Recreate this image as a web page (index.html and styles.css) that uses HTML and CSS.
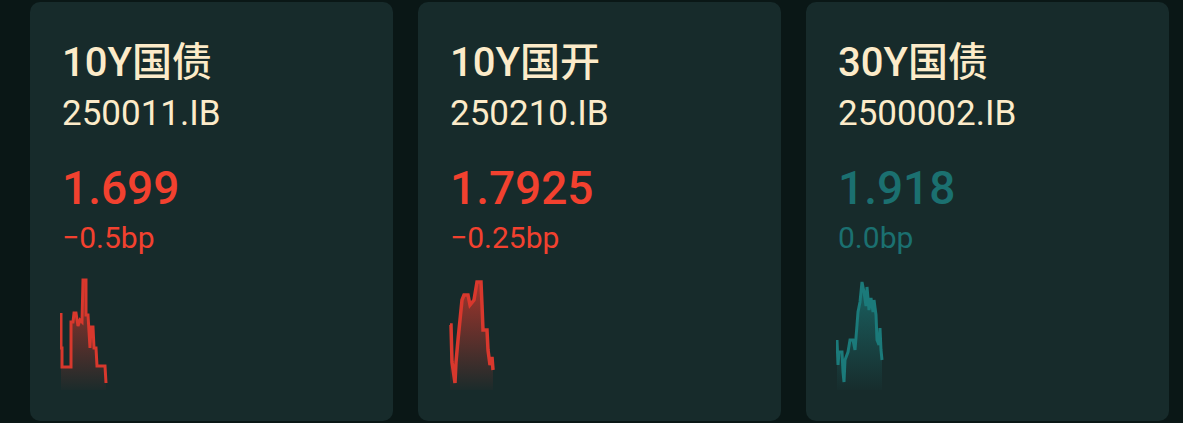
FILE: index.html
```html
<!DOCTYPE html>
<html lang="zh-CN">

<head>
    <meta charset="UTF-8">
    <meta name="viewport" content="width=device-width, initial-scale=1.0">
    <title>利率行情</title>
    <link rel="stylesheet" href="styles.css">
</head>

<body>
    <div class="board">
        <!-- 10Y国债 -->
        <div class="card down">
            <div class="title">10Y国债</div>
            <div class="code">250011.IB</div>
            <div class="price">1.699</div>
            <div class="change">−0.5bp</div>
            <svg class="spark" width="50" height="115" viewBox="0 0 50 115">
                <defs>
                    <linearGradient id="fillRed1" x1="0" y1="0" x2="0" y2="1">
                        <stop offset="0" stop-color="#e0392c" stop-opacity="0.7" />
                        <stop offset="1" stop-color="#e0392c" stop-opacity="0.02" />
                    </linearGradient>
                </defs>
                <path class="area" fill="url(#fillRed1)"
                    d="M1,38 L1,73 L2,73 L2,92 L11,92 L11,47 L13,47 L14,38 L16,38 L18,51 L20,45 L22,47 L23,5 L26,5 L26,40 L28,40 L30,73 L31,52 L33,52 L34,73 L36,73 L37,91 L45,91 L46,108 L46,115 L1,115 Z" />
                <path class="line"
                    d="M1,38 L1,73 L2,73 L2,92 L11,92 L11,47 L13,47 L14,38 L16,38 L18,51 L20,45 L22,47 L23,5 L26,5 L26,40 L28,40 L30,73 L31,52 L33,52 L34,73 L36,73 L37,91 L45,91 L46,108" />
            </svg>
        </div>

        <!-- 10Y国开 -->
        <div class="card down">
            <div class="title">10Y国开</div>
            <div class="code">250210.IB</div>
            <div class="price">1.7925</div>
            <div class="change">−0.25bp</div>
            <svg class="spark" width="50" height="115" viewBox="0 0 50 115">
                <defs>
                    <linearGradient id="fillRed2" x1="0" y1="0" x2="0" y2="1">
                        <stop offset="0" stop-color="#e0392c" stop-opacity="0.7" />
                        <stop offset="1" stop-color="#e0392c" stop-opacity="0.02" />
                    </linearGradient>
                </defs>
                <path class="area" fill="url(#fillRed2)"
                    d="M2,50 L3,50 L4,87 L7,108 L8,87 L10,65 L12,45 L14,25 L16,20 L20,20 L22,30 L26,25 L29,7 L33,7 L34,30 L35,55 L39,55 L40,75 L42,90 L44,82 L45,95 L45,115 L2,115 Z" />
                <path class="line thick"
                    d="M2,50 L3,50 L4,87 L7,108 L8,87 L10,65 L12,45 L14,25 L16,20 L20,20 L22,30 L26,25 L29,7 L33,7 L34,30 L35,55 L39,55 L40,75 L42,90 L44,82 L45,95" />
            </svg>
        </div>

        <!-- 30Y国债 -->
        <div class="card flat">
            <div class="title">30Y国债</div>
            <div class="code">2500002.IB</div>
            <div class="price">1.918</div>
            <div class="change">0.0bp</div>
            <svg class="spark" width="50" height="115" viewBox="0 0 50 115">
                <defs>
                    <linearGradient id="fillTeal" x1="0" y1="0" x2="0" y2="1">
                        <stop offset="0" stop-color="#1b7a7a" stop-opacity="0.7" />
                        <stop offset="1" stop-color="#1b7a7a" stop-opacity="0.02" />
                    </linearGradient>
                </defs>
                <path class="area" fill="url(#fillTeal)"
                    d="M1,65 L2,90 L3,77 L6,77 L7,97 L8,107 L9,85 L12,77 L14,65 L17,65 L19,75 L21,50 L22,37 L24,27 L26,7 L28,17 L30,31 L31,12 L33,35 L35,23 L37,37 L38,25 L40,40 L41,65 L43,70 L44,53 L45,75 L46,85 L46,115 L1,115 Z" />
                <path class="line"
                    d="M1,65 L2,90 L3,77 L6,77 L7,97 L8,107 L9,85 L12,77 L14,65 L17,65 L19,75 L21,50 L22,37 L24,27 L26,7 L28,17 L30,31 L31,12 L33,35 L35,23 L37,37 L38,25 L40,40 L41,65 L43,70 L44,53 L45,75 L46,85" />
            </svg>
        </div>
    </div>
</body>

</html>
```

FILE: styles.css
```css
body {
    margin: 0;
    background-color: #0a1716;
    font-family: "Roboto", "Noto Sans CJK SC", sans-serif;
}

.board {
    display: flex;
    gap: 25px;
    padding: 2px 14px 2px 30px;
}

.card {
    width: 363px;
    height: 419px;
    box-sizing: border-box;
    padding: 38px 32px 0 32px;
    background-color: #172b2b;
    border-radius: 10px;
}

.title {
    font-size: 40px;
    line-height: 46px;
    font-weight: 500;
    color: #fcebc9;
}

.code {
    margin-top: 8px;
    font-size: 35px;
    line-height: 40px;
    color: #fcebc9;
}

.price {
    margin-top: 27px;
    font-size: 46px;
    line-height: 54px;
    font-weight: 500;
}

.change {
    margin-top: 6px;
    font-size: 30px;
    line-height: 34px;
}

.down .price,
.down .change {
    color: #f2412f;
}

.flat .price,
.flat .change {
    color: #1b7070;
}

.spark {
    display: block;
    margin: 20px 0 0 -2px;
}

.spark .line {
    fill: none;
    stroke-width: 3;
    stroke-linejoin: miter;
}

.spark .thick {
    stroke-width: 3.5;
}

.down .spark .line {
    stroke: #d8382d;
}

.flat .spark .line {
    stroke: #1b7a7a;
}
```
